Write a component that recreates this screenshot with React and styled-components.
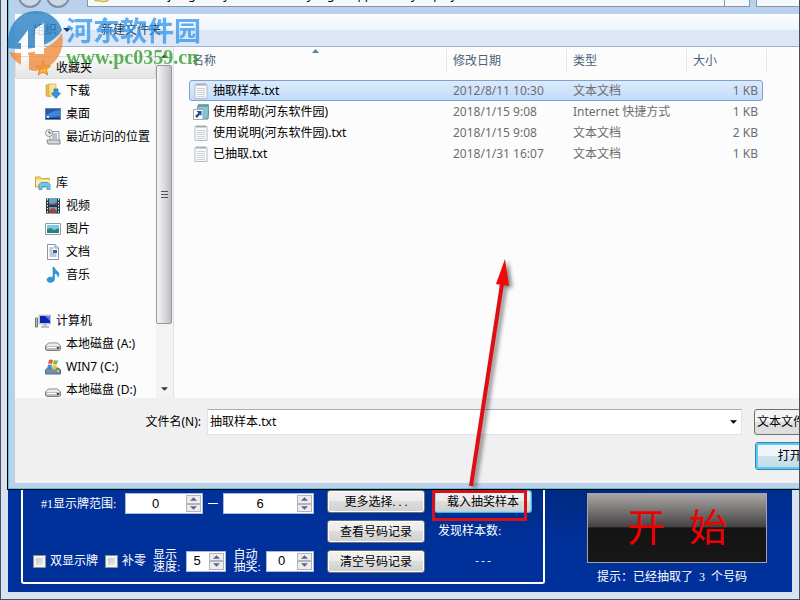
import { useState } from 'react';
import styled, { createGlobalStyle } from 'styled-components';

const GlobalStyle = createGlobalStyle`
  * { box-sizing: border-box; }
  body {
    margin: 0;
    font: 12px/16px "Noto Sans", "Noto Sans CJK SC", sans-serif;
    color: #000;
  }
  button, input, select { font: inherit; color: inherit; margin: 0; }
`;

const Window = styled.div`
  position: relative;
  display: flex;
  flex-direction: column;
  height: 100vh;
  min-height: 600px;
  padding: 0 7px 7px 6px;
  overflow: hidden;
  background: #d7e3f1;
  border: 1px solid #4b4f57;
  border-top: 0;
`;

/* file dialog */

const Dialog = styled.section`
  flex: 1;
  min-height: 0;
  display: flex;
  flex-direction: column;
  margin-right: -120px;
  padding: 0 0 6px 7px;
  background: #b9d1ea;
  border-left: 1px solid #000;
  border-bottom: 1px solid #000;
  box-shadow: inset 1px -1px 0 #58c3dc;
`;

const AddressRow = styled.header`
  display: flex;
  align-items: flex-end;
  flex-shrink: 0;
  height: 7px;
  margin-bottom: 7px;
  padding-left: 3px;
`;

const NavButton = styled.button`
  width: 24px;
  height: 24px;
  margin: 0 4px -1px 0;
  padding: 0;
  border: 2px solid #7e8da1;
  border-radius: 50%;
  background: #cbd8e8;
  flex-shrink: 0;
`;

const AddressBox = styled.div`
  display: flex;
  align-items: center;
  gap: 8px;
  width: ${props => props.$width || 'auto'};
  flex: ${props => props.$width ? 'none' : '1'};
  height: 24px;
  margin-left: ${props => props.$gap};
  padding: 0 6px;
  background: #f6f9fc;
  border: 1px solid #8496ab;
  white-space: pre;
`;

const Toolbar = styled.div`
  display: flex;
  align-items: center;
  flex-shrink: 0;
  height: 33px;
  padding-left: 18px;
  gap: 30px;
  background: linear-gradient(#fbfdff 0, #eef5fc 50%, #dce6f4 50%, #dde7f5 100%);
  border-bottom: 1px solid #9fb3ca;
`;

const ToolButton = styled.button`
  display: flex;
  align-items: center;
  gap: 6px;
  padding: 0;
  border: 0;
  background: none;
  color: #1e395b;
`;

const Body = styled.div`
  flex: 1;
  min-height: 0;
  display: flex;
  background: #fcfcfc;
`;

const Sidebar = styled.nav`
  display: flex;
  width: 159px;
  flex-shrink: 0;
  overflow: hidden;
  border-right: 1px solid #d9e3ee;
`;

const Tree = styled.div`
  flex: 1;
  min-width: 0;
  padding-top: 9px;
  overflow: hidden;
`;

const Group = styled.ul`
  list-style: none;
  margin: 0 0 23px;
  padding: 0;
`;

const TreeItem = styled.li`
  height: 23px;
  padding: 0 2px 0 ${props => props.$root ? '19px' : '29px'};
  border: 1px solid ${props => props.$active ? '#dcdcdc' : 'transparent'};
  border-radius: 2px;
  background: ${props => props.$active ? 'linear-gradient(#f8f8f8, #e5e5e5)' : 'none'};
`;

const TreeLink = styled.a`
  display: flex;
  align-items: center;
  gap: 5px;
  height: 21px;
  color: #000;
  text-decoration: none;
  white-space: nowrap;
`;

const Scrollbar = styled.div`
  display: flex;
  flex-direction: column;
  width: 17px;
  padding-right: 1px;
  background: #f3f3f3;
`;

const ScrollArrow = styled.button`
  height: 18px;
  padding: 0;
  border: 0;
  background: none;
  line-height: 0;
`;

const ScrollThumb = styled.div`
  flex: 259;
  display: flex;
  align-items: center;
  justify-content: center;
  border: 1px solid #979797;
  border-radius: 2px;
  background: linear-gradient(90deg, #f5f5f5, #dcdce0 50%, #bdbdc4);
`;

const ScrollRest = styled.div`
  flex: 56;
`;

const Files = styled.table`
  display: block;
  margin-left: 13px;
  color: #6d6d6d;
`;

const HeadRow = styled.tr`
  display: grid;
  grid-template-columns: 258px 120px 120px 80px;
  height: 29px;
`;

const HeadCell = styled.th`
  position: relative;
  height: 24px;
  padding: 4px 0 0 ${props => props.$first ? '3px' : '6px'};
  border-right: 1px solid #e2e8f0;
  color: #4c607a;
  font-weight: normal;
  text-align: left;
`;

const SortMark = styled.svg`
  position: absolute;
  top: 0;
  left: 48%;
`;

const FileRow = styled.tr`
  display: grid;
  grid-template-columns: 257px 120px 120px 75px;
  align-items: center;
  width: 574px;
  height: 21px;
  border: 1px solid ${props => props.$selected ? '#7da2ce' : 'transparent'};
  border-radius: 3px;
  background: ${props => props.$selected ? 'linear-gradient(#dcebfc, #c1dbfc)' : 'none'};
`;

const Cell = styled.td`
  padding: 0 4px 0 6px;
  text-align: ${props => props.$right ? 'right' : 'left'};
  white-space: nowrap;
`;

const NameCell = styled(Cell)`
  display: flex;
  align-items: center;
  gap: 4px;
  padding-left: 3px;
  color: #000;
`;

const Footer = styled.form`
  display: grid;
  grid-template-columns: 186px 1fr 152px;
  column-gap: 6px;
  row-gap: 6px;
  align-items: center;
  flex-shrink: 0;
  height: 85px;
  padding: 11px 6px 13px 0;
  background: #f0f0f0;
`;

const NameLabel = styled.label`
  text-align: right;
`;

const SelectBox = styled.div`
  display: flex;
  align-items: center;
  height: 26px;
  margin-right: ${props => props.$filter ? '0' : '6px'};
  padding-right: 4px;
  background: ${props => props.$filter ? 'linear-gradient(#f3f3f3 50%, #dedede 50%)' : '#fff'};
  border: 1px solid ${props => props.$filter ? '#707070' : '#e2e3ea'};
  border-top-color: ${props => props.$filter ? '#707070' : '#abadb3'};
  border-radius: ${props => props.$filter ? '3px' : '0'};
`;

const Select = styled.select`
  flex: 1;
  appearance: none;
  padding: 0 2px;
  border: 0;
  outline: 0;
  background: none;
`;

const OpenButton = styled.button`
  grid-column: 3;
  width: 86px;
  height: 28px;
  margin-left: 1px;
  border: 1px solid #3c7fb1;
  border-radius: 3px;
  box-shadow: inset 0 0 0 2px #5ccbf0;
  background: linear-gradient(#eef5fa 50%, #cfe2ee 50%, #c2dbe9);
`;

/* lottery panel */

const Panel = styled.section`
  display: flex;
  justify-content: space-between;
  flex-shrink: 0;
  margin-left: 1px;
  padding: 0 25px 8px 13px;
  background: radial-gradient(ellipse at 75% 0, #002a80 0, #00309a 35%);
  color: #fff;
  font-family: "Liberation Serif", "Noto Sans CJK SC", serif;
`;

const Box = styled.div`
  display: flex;
  padding: 0 11px 9px 10px;
  border: 2px solid #fff;
  border-top: 0;
  border-radius: 0 0 3px 3px;
`;

const Settings = styled.div`
  display: flex;
  flex-direction: column;
  justify-content: space-between;
  width: 281px;
  margin-right: 13px;
  padding-top: 3px;
`;

const Line = styled.div`
  display: flex;
  align-items: center;
  padding-left: ${props => props.$indent || '0'};
`;

const RangeLabel = styled.label`
  width: 84px;
  white-space: nowrap;
`;

const Spin = styled.span`
  display: flex;
  width: ${props => props.$width};
  height: 21px;
  background: #fff;
  border: 1px solid #a9b9dc;
  color: #000;
`;

const SpinInput = styled.input`
  flex: 1;
  min-width: 0;
  padding: 0;
  border: 0;
  outline: 0;
  background: none;
  font: 13px/16px "Liberation Sans", sans-serif;
  text-align: center;
`;

const SpinButtons = styled.span`
  display: flex;
  flex-direction: column;
  width: 15px;
  margin: 1px;
  flex-shrink: 0;
`;

const SpinButton = styled.button`
  flex: 1;
  min-height: 0;
  padding: 0;
  border: 1px solid #b5b5b8;
  background: #ececee;
  line-height: 0;
`;

const Dash = styled.span`
  width: 10px;
  height: 1px;
  margin: 0 5px;
  background: #fff;
`;

const Check = styled.label`
  display: flex;
  align-items: center;
  gap: 4px;
  margin-right: 7px;
  white-space: nowrap;
`;

const CheckInput = styled.input`
  appearance: none;
  width: 13px;
  height: 13px;
  border: 1px solid #8e8f8f;
  box-shadow: inset 0 0 0 2px #f4f4f4;
  background: linear-gradient(135deg, #b9bfc8, #f4f4f4);
  &:checked { background: #4b6ea0; }
`;

const TwoLine = styled.label`
  width: 33px;
  margin-left: ${props => props.$gap || '0'};
  line-height: 12px;
  white-space: pre;
`;

const Column = styled.div`
  display: flex;
  flex-direction: column;
  gap: 7px;
  width: 98px;
`;

const PushButton = styled.button`
  width: 98px;
  height: 23px;
  padding: 0;
  border: 1px solid ${props => props.$hot ? '#3cb6d8' : '#707070'};
  border-radius: 3px;
  box-shadow: inset 0 0 0 1px ${props => props.$hot ? '#8edcf2' : '#fcfcfc'};
  background: linear-gradient(#f2f2f2 0, #ebebeb 50%, #dddddd 50%, #cfcfcf 100%);
  color: #000;
`;

const LoadColumn = styled(Column)`
  position: relative;
  margin-left: 9px;
`;

const Marker = styled.div`
  position: absolute;
  top: 0;
  left: -2px;
  width: 95px;
  height: 31px;
  border: 3px solid #d8101c;
  pointer-events: none;
`;

const SampleText = styled.span`
  height: 23px;
  padding-left: 4px;
  line-height: 23px;
`;

const SampleCount = styled.output`
  height: 23px;
  font: 10px/23px "Liberation Mono", monospace;
  text-align: center;
`;

const StartArea = styled.div`
  display: flex;
  flex-direction: column;
  align-items: center;
  gap: 7px;
  padding-top: 3px;
`;

const StartButton = styled.button`
  display: flex;
  align-items: center;
  justify-content: center;
  gap: 24px;
  width: 180px;
  height: 70px;
  padding: 0;
  border: 1px solid #a5a5a5;
  background: linear-gradient(#aaa6a6 0, #454343 48%, #141414 50%, #171717 100%);
  color: #f00000;
  font-size: 38px;
  line-height: 60px;
`;

const Hint = styled.span`
  width: 160px;
  line-height: 14px;
  white-space: nowrap;
`;

/* things lying over the window */

const Arrow = styled.svg`
  position: absolute;
  left: 459px;
  top: 250px;
  pointer-events: none;
  filter: drop-shadow(3px 2px 2px rgba(0, 0, 0, 0.5));
`;

const Watermark = styled.div`
  position: absolute;
  top: 10px;
  left: 6px;
  display: flex;
  gap: 3px;
  pointer-events: none;
`;

const WatermarkText = styled.div`
  padding-top: 4px;
  color: #2f95ea;
  font: bold 27px/32px "Noto Sans CJK SC", sans-serif;
  opacity: 0.75;
`;

const WatermarkUrl = styled.div`
  color: #40a53f;
  font: bold 20px/22px "Liberation Serif", serif;
  opacity: 0.85;
`;

const Triangle = ({ up, size = 7, color = '#333' }) => (
  <svg width={size} height="4" viewBox="0 0 8 4">
    <path d={up ? 'M0 4 4 0 8 4Z' : 'M0 0 4 4 8 0Z'} fill={color} />
  </svg>
);

const drawings = {
  star: (
    <path d="M8 .5 10 5.6 15.6 6 11.300 9.500 12.800 15 8 12 3.200 15 4.700 9.500.4 6 6 5.600Z" fill="#fcb43c" stroke="#e7822b" />
  ),
  folder: (
    <path d="M1 2h5l1 2h7v10l-6 1-1-1H1Z" fill="#f6dc7c" stroke="#cda74a" />
  ),
  download: (
    <>
      <path d="M1 2 5 1v13l-4-1Z" fill="#e7bd55" stroke="#c69b3c" strokeWidth=".6" />
      <path d="M4 1h7v12H4Z" fill="#fbe28e" stroke="#d2a945" strokeWidth=".7" />
      <path d="M9 6h4v4h2.500L11 15.500 6.500 10H9Z" fill="#2b9ae8" stroke="#1767ae" strokeWidth=".7" />
    </>
  ),
  desktop: (
    <>
      <rect x=".5" y="2.500" width="15" height="11" fill="#2457ae" stroke="#6f849b" />
      <path d="M1 9Q7 5 15 4v6L1 12Z" fill="#3e87d6" />
      <path d="M1 12h14v1H1Z" fill="#123264" />
      <path d="M2 10h2v2H2Z" fill="#cfeaff" />
    </>
  ),
  recent: (
    <>
      <path d="M5 2.500h9v10H5Z" fill="#f2f4f7" stroke="#929aa5" />
      <path d="M7 5h5M7 7h5M7 9h5" stroke="#758fae" />
      <circle cx="4" cy="4" r="3.500" fill="#eef2f4" stroke="#93989c" />
      <path d="M4 2v2h2" stroke="#555" fill="none" />
      <path d="M2 11h13v4H3Z" fill="#d4d7da" stroke="#83888e" />
    </>
  ),
  library: (
    <>
      <path d="M.5 2h5l1 1.500h8V12H.5Z" fill="#f3d878" stroke="#c8a64c" />
      <path d="M1 5h14v6H1Z" fill="#fbebaa" />
      <path d="M4 14.500V9.500l2-2h7l2 2v5h-3v-3H7v3Z" fill="#6dc4ec" stroke="#3f92c2" strokeWidth=".8" />
    </>
  ),
  video: (
    <>
      <path d="M1 .5h14v15H1Z" fill="#203746" />
      <path d="M4 1h8v6H4Zm0 8h8v6H4Z" fill="#5aa5d5" />
      <path d="m4 5 4 1 4-2v3H4Zm0 7 4-2 4 3v2H4Z" fill="#a34135" />
      <path d="M2.500 1v14M13.500 1v14" stroke="#e8f2f5" strokeDasharray="1.500 1.500" />
    </>
  ),
  picture: (
    <>
      <path d="M.5 2.500h15v11H.5Z" fill="#fff" stroke="#929ca3" />
      <path d="M2 4h12v8H2Z" fill="#79c9ee" />
      <path d="m2 8 4-1 3 2 5-2v5H2Z" fill="#30895a" />
      <path d="M2 11q6-2 12 0v1H2Z" fill="#2b77a8" />
    </>
  ),
  document: (
    <>
      <path d="M2.500.5H10L13.500 4v11.500h-11Z" fill="#fff" stroke="#8796aa" />
      <path d="M10 .5V4h3.500M4.500 4h4M4.500 6h3M4.500 8h3M4.500 10h7M4.500 12h7" stroke="#7995b8" fill="none" />
      <path d="M8 6h4v3H8Z" fill="#3b6292" />
    </>
  ),
  music: (
    <path d="M8 0h1q1 3 4 5 2 2 0 5 0-3-3.500-4v6q0 3-4 3.500Q2 15.500 2 12.500 2.500 10 5.500 10q1.500 0 2.500.5Z" fill="#2a99dd" stroke="#2079b7" strokeWidth=".5" />
  ),
  computer: (
    <>
      <path d="M.5 5h2v9h-2Z" fill="#b8c4c1" stroke="#647971" />
      <path d="M4 2h12v9H4Z" fill="#c9d2de" stroke="#9ba7b9" strokeWidth=".6" />
      <path d="M5 3h10v7H5Z" fill="#0b25b2" />
      <path d="m10 3 5 0v5Z" fill="#557ff0" />
      <path d="M8 11h4v2h2v2H6v-2h2Z" fill="#b6c0ce" />
    </>
  ),
  disk: (
    <>
      <path d="m.5 10 3-3h9l3 3v3.500l-1.500 1H2l-1.500-1Z" fill="#b9bbbd" stroke="#7d8082" />
      <path d="m1 10 3-2.500h8L15 10Z" fill="#eceded" />
      <path d="M2 11.500h9" stroke="#fff" />
      <path d="M12 11h2v2h-2Z" fill="#435145" />
    </>
  ),
  windisk: (
    <>
      <path d="m.5 11 2-2h11l2 2v4H.5Z" fill="#718fa0" stroke="#557181" />
      <path d="M4 1q2-1 4 0L7 5Q5 4 3 5Z" fill="#ea5930" />
      <path d="M9 1q2 1 4 0l-1 4q-2 1-4 0Z" fill="#78b83b" />
      <path d="M3 6q2-1 4 0l-1 4Q4 9 2 10Z" fill="#388ed8" />
      <path d="M8 6q2 1 4 0l-1 4q-2 1-4 0Z" fill="#f9bc24" />
      <path d="M12 11h2v2h-2Z" fill="#80e86d" />
    </>
  ),
  text: (
    <>
      <path d="M2 1.500h12v14H2Z" fill="#f8fafa" stroke="#b4bcc0" />
      <path d="M4 0v3M6 0v3M8 0v3M10 0v3M12 0v3" stroke="#8d999d" strokeWidth=".8" />
      <path d="M4 5.500h8M4 7.500h8M4 9.500h8M4 11.500h8M4 13.500h8" stroke="#c9d2d8" />
    </>
  ),
  shortcut: (
    <>
      <path d="M5 1h11l-1 14H4Z" fill="#83c4d1" stroke="#558f9d" />
      <path d="M6 0v3M8 0v3M10 0v3M12 0v3M14 0v3" stroke="#547982" strokeWidth=".8" />
      <path d="M.5 5.500h9.500v10H.5Z" fill="#fff" stroke="#a7a7a7" />
      <path d="M3.500 7H8.500v5L7 10.500 4 14 2 12 5.500 9Z" fill="#1f4f9c" />
    </>
  ),
};

const Icon = ({ name }) => (
  <svg width="16" height="16" viewBox="0 0 16 16" style={{ flexShrink: 0 }} aria-hidden="true">
    {drawings[name]}
  </svg>
);

const groups = [
  [['star', '收藏夹'], ['download', '下载'], ['desktop', '桌面'], ['recent', '最近访问的位置']],
  [['library', '库'], ['video', '视频'], ['picture', '图片'], ['document', '文档'], ['music', '音乐']],
  [['computer', '计算机'], ['disk', '本地磁盘 (A:)'], ['windisk', 'WIN7 (C:)'], ['disk', '本地磁盘 (D:)']],
];

const files = [
  { icon: 'text', name: '抽取样本.txt', date: '2012/8/11 10:30', type: '文本文档', size: '1 KB' },
  { icon: 'shortcut', name: '使用帮助(河东软件园)', date: '2018/1/15 9:08', type: 'Internet 快捷方式', size: '1 KB' },
  { icon: 'text', name: '使用说明(河东软件园).txt', date: '2018/1/15 9:08', type: '文本文档', size: '2 KB' },
  { icon: 'text', name: '已抽取.txt', date: '2018/1/31 16:07', type: '文本文档', size: '1 KB' },
];

const SpinBox = ({ id, label, start, width }) => {
  const [value, setValue] = useState(start);
  return (
    <Spin $width={width}>
      <SpinInput id={id} aria-label={label} value={value} onChange={e => setValue(Number(e.target.value) || 0)} />
      <SpinButtons>
        <SpinButton type="button" aria-label="增加" onClick={() => setValue(value + 1)}>
          <Triangle up color="#5b6592" />
        </SpinButton>
        <SpinButton type="button" aria-label="减少" onClick={() => setValue(value - 1)}>
          <Triangle color="#5b6592" />
        </SpinButton>
      </SpinButtons>
    </Spin>
  );
};

const FileDialog = () => {
  const [selected, setSelected] = useState(files[0].name);
  return (
    <Dialog>
      <AddressRow>
        <NavButton aria-label="后退" />
        <NavButton aria-label="前进" />
        <AddressBox $gap="13px">
          <Icon name="folder" />
          {'«  soft  ›  jiang  ›  my  ›  number  ›  yang  ›  app  ›  lucky  ›  play'}
        </AddressBox>
        <AddressBox $width="26px" $gap="-1px" />
        <AddressBox $width="156px" $gap="6px">搜索</AddressBox>
      </AddressRow>
      <Toolbar>
        <ToolButton type="button">组织 <Triangle size={8} color="#1e395b" /></ToolButton>
        <ToolButton type="button">新建文件夹</ToolButton>
      </Toolbar>
      <Body>
        <Sidebar>
          <Tree>
            {groups.map(items => (
              <Group key={items[0][1]}>
                {items.map(([icon, text], i) => (
                  <TreeItem key={text} $root={i === 0} $active={icon === 'star'}>
                    <TreeLink href="#"><Icon name={icon} />{text}</TreeLink>
                  </TreeItem>
                ))}
              </Group>
            ))}
          </Tree>
          <Scrollbar>
            <ScrollArrow type="button" aria-label="向上"><Triangle up /></ScrollArrow>
            <ScrollThumb>
              <svg width="7" height="9"><path d="M0 1.500h7M0 4.500h7M0 7.500h7" stroke="#555" /></svg>
            </ScrollThumb>
            <ScrollRest />
            <ScrollArrow type="button" aria-label="向下"><Triangle /></ScrollArrow>
          </Scrollbar>
        </Sidebar>
        <Files>
          <thead>
            <HeadRow>
              <HeadCell $first>
                名称
                <SortMark width="7" height="4"><path d="M0 4 3.500 0 7 4Z" fill="#5c8299" /></SortMark>
              </HeadCell>
              <HeadCell>修改日期</HeadCell>
              <HeadCell>类型</HeadCell>
              <HeadCell>大小</HeadCell>
            </HeadRow>
          </thead>
          <tbody>
            {files.map(file => (
              <FileRow key={file.name} $selected={file.name === selected} onClick={() => setSelected(file.name)}>
                <NameCell><Icon name={file.icon} />{file.name}</NameCell>
                <Cell>{file.date}</Cell>
                <Cell>{file.type}</Cell>
                <Cell $right>{file.size}</Cell>
              </FileRow>
            ))}
          </tbody>
        </Files>
      </Body>
      <Footer onSubmit={e => e.preventDefault()}>
        <NameLabel htmlFor="filename">文件名(N):</NameLabel>
        <SelectBox>
          <Select id="filename" value={selected} onChange={e => setSelected(e.target.value)}>
            {files.map(file => <option key={file.name}>{file.name}</option>)}
          </Select>
          <Triangle color="#000" />
        </SelectBox>
        <SelectBox $filter>
          <Select aria-label="文件类型"><option>文本文件(*.txt)</option></Select>
          <Triangle color="#000" />
        </SelectBox>
        <OpenButton>打开(O)</OpenButton>
      </Footer>
    </Dialog>
  );
};

const LotteryPanel = () => (
  <Panel>
    <Box>
      <Settings>
        <Line $indent="8px">
          <RangeLabel htmlFor="from">#1显示牌范围:</RangeLabel>
          <SpinBox id="from" start={0} width="78px" />
          <Dash />
          <SpinBox label="范围上限" start={6} width="91px" />
        </Line>
        <Line>
          <Check><CheckInput type="checkbox" />双显示牌</Check>
          <Check><CheckInput type="checkbox" />补零</Check>
          <TwoLine htmlFor="speed">{'显示\n速度:'}</TwoLine>
          <SpinBox id="speed" start={5} width="40px" />
          <TwoLine htmlFor="auto" $gap="8px">{'自动\n抽奖:'}</TwoLine>
          <SpinBox id="auto" start={0} width="48px" />
        </Line>
      </Settings>
      <Column>
        <PushButton type="button">更多选择. . .</PushButton>
        <PushButton type="button">查看号码记录</PushButton>
        <PushButton type="button">清空号码记录</PushButton>
      </Column>
      <LoadColumn>
        <PushButton type="button" $hot>载入抽奖样本</PushButton>
        <SampleText>发现样本数:</SampleText>
        <SampleCount>---</SampleCount>
        <Marker />
      </LoadColumn>
    </Box>
    <StartArea>
      <StartButton type="button"><span>开</span><span>始</span></StartButton>
      <Hint>提示：已经抽取了&nbsp; 3&nbsp; 个号码</Hint>
    </StartArea>
  </Panel>
);

export default function App() {
  return (
    <>
      <GlobalStyle />
      <Window>
        <FileDialog />
        <LotteryPanel />
        <Arrow width="70" height="245" viewBox="0 0 70 245">
          <path d="M11 236 42 34" stroke="#dc0f12" strokeWidth="4" />
          <path d="M45 9 36 34 49 36Z" fill="#f20808" />
        </Arrow>
        <Watermark>
          <svg width="56" height="62" viewBox="0 0 56 62" opacity=".8">
            <path d="M1 38C-1 16 12 1 29 1c13 0 23 8 26 19C47 34 27 42 1 38Z" fill="#2c82c4" />
            <path d="M55 23c4 19-8 36-27 38l-6-1V45h-8v10C8 51 4 47 2 42 25 46 45 39 55 23Z" fill="#f08c3c" />
            <path d="M11 33 21 20v25h-7V33Zm17-14 9-6v31h-9Z" fill="#fff" />
          </svg>
          <div>
            <WatermarkText>河东软件园</WatermarkText>
            <WatermarkUrl>www.pc0359.cn</WatermarkUrl>
          </div>
        </Watermark>
      </Window>
    </>
  );
}
